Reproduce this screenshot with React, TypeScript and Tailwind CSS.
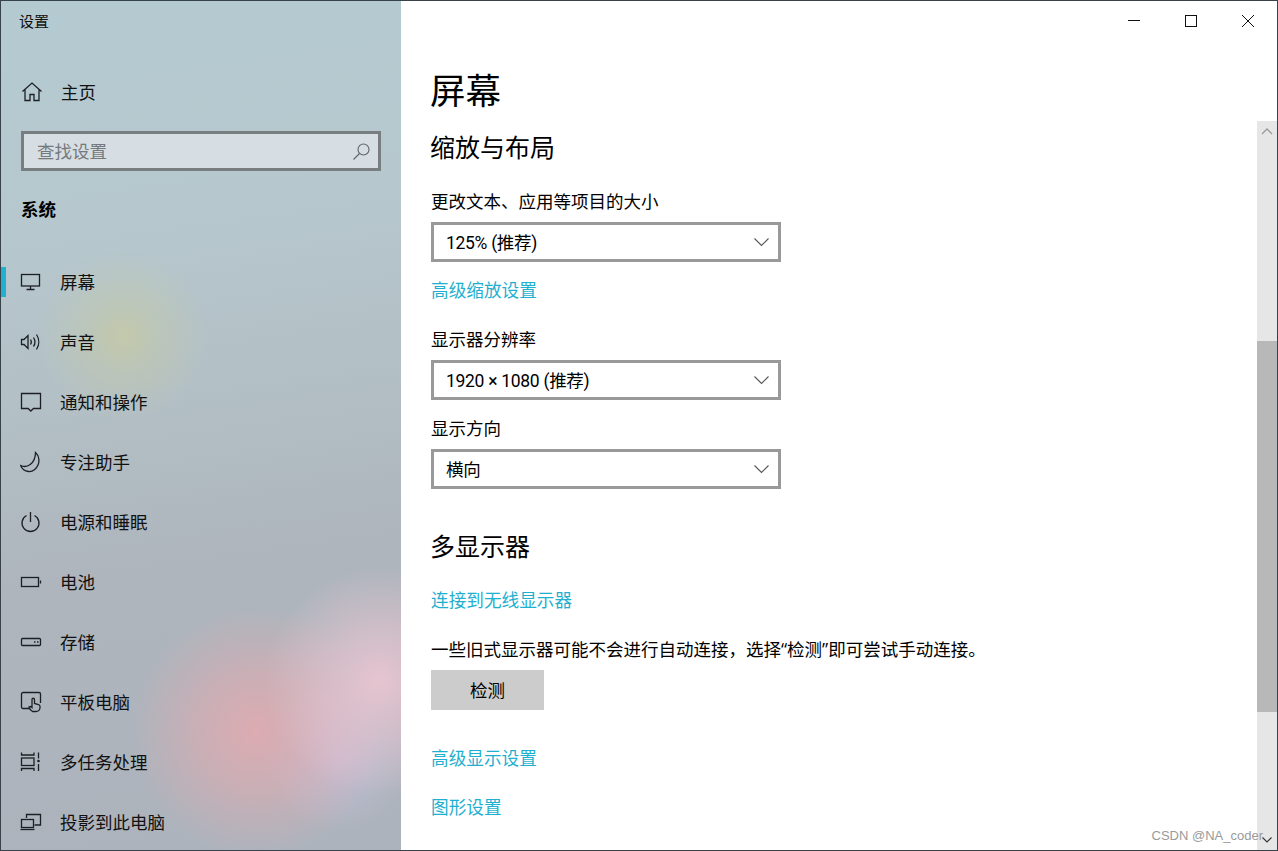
// Windows 10 settings window, display page
import { type ReactNode } from "react";

const Glyph = ({ children }: { children: ReactNode }) => (
  <svg width="22" height="22" viewBox="0 0 22 22" fill="none" stroke="#1c2024" strokeWidth="1.3" className="shrink-0">
    {children}
  </svg>
);

const navItems: { label: string; icon: ReactNode }[] = [
  {
    label: "屏幕",
    icon: (
      <>
        <rect x="1.5" y="3.5" width="18" height="11.5" />
        <path d="M10.5 15v3M6.5 18.5h8" />
      </>
    ),
  },
  {
    label: "声音",
    icon: (
      <>
        <path d="M1.5 8.5h2.5l4-4v13l-4-4H1.5z" />
        <path d="M10.5 8.5c1 1.5 1 3.5 0 5M13.5 6.5c1.8 2.8 1.8 6.2 0 9M16.5 3.5c3 4.5 3 10.5 0 15" />
      </>
    ),
  },
  {
    label: "通知和操作",
    icon: <path d="M1.5 2.5h19v15h-7l-2.7 2.5-2.7-2.5h-6.6z" />,
  },
  {
    label: "专注助手",
    icon: <path d="M15.500 1.500C19.500 5 19.500 10.500 18 14c-2 4.500-6 6.800-9.500 6.500-3.500-.3-6.500-2.500-7.800-6 3 1.500 6.500 1.200 9.500-1 4-3 5.300-7.500 5.300-12z" />,
  },
  {
    label: "电源和睡眠",
    icon: (
      <>
        <path d="M10.500 1v10" />
        <path d="M6.500 4.500a8.500 8.500 0 1 0 8 0" />
      </>
    ),
  },
  {
    label: "电池",
    icon: (
      <>
        <rect x="1.500" y="6.500" width="17" height="9" />
        <path d="M20.500 9.500v3" />
      </>
    ),
  },
  {
    label: "存储",
    icon: (
      <>
        <rect x="1.500" y="7.500" width="19" height="7" rx="1" />
        <path d="M14 11h1.500M17 11h1.500" />
      </>
    ),
  },
  {
    label: "平板电脑",
    icon: (
      <>
        <path d="M10 17.500H3a1.500 1.500 0 0 1-1.500-1.500V3A1.500 1.500 0 0 1 3 1.500h16A1.500 1.500 0 0 1 20.500 3v9" />
        <path d="M12.500 20.500c-2-1-3-2.500-3.500-4.500l1.800-.5 1.200 1V8.500a1.200 1.200 0 0 1 2.500 0v4l4 1c1 .4 1.500 1 1.500 2v1c0 2-1.500 4-4 4z" />
      </>
    ),
  },
  {
    label: "多任务处理",
    icon: (
      <>
        <path d="M1.500 1.500v2.500h12.500V1.500M1.500 20v-2.500h12.500V20" />
        <rect x="1.500" y="7" width="12.500" height="7.500" />
        <path d="M18.500 1.500v6M18.500 13v7" />
        <circle cx="18.500" cy="10" r="1.300" fill="#1c2024" stroke="none" />
      </>
    ),
  },
  {
    label: "投影到此电脑",
    icon: (
      <>
        <path d="M6.500 7V3.500h14v10.500h-6" />
        <rect x="1.500" y="8.500" width="12" height="8" />
        <path d="M.5 18.500h14" />
      </>
    ),
  },
];

function NavRow({ label, icon, active }: { label: string; icon: ReactNode; active?: boolean }) {
  return (
    <div className="flex h-[60px] shrink-0 items-center">
      <span className={active ? "h-[30px] w-[5px] shrink-0 bg-[#1fb0d2]" : "h-[30px] w-[5px] shrink-0"} />
      <span className="ml-[14px] flex w-[40px] shrink-0">
        <Glyph>{icon}</Glyph>
      </span>
      <span className="text-[17.5px] text-[#111]">{label}</span>
    </div>
  );
}

function Select({ value }: { value: string }) {
  return (
    <div className="mt-2 flex h-10 w-[350px] items-center justify-between border-[3px] border-[#999] pl-3 pr-[9px]">
      <span className="pt-[2px] font-['Roboto','Noto_Sans_CJK_SC',sans-serif] text-[17.5px] tracking-[-0.3px] text-black">{value}</span>
      <svg width="15" height="9" viewBox="0 0 15 9" fill="none" stroke="#555" strokeWidth="1.1">
        <path d="M.5.5 7.500 7.500l7-7" />
      </svg>
    </div>
  );
}

function Label({ children, className }: { children: ReactNode; className: string }) {
  return <div className={`h-[26px] text-[17.5px] leading-[26px] text-black ${className}`}>{children}</div>;
}

function Link({ children, className }: { children: ReactNode; className: string }) {
  return <div className={`h-[26px] text-[17.65px] leading-[26px] text-[#1fb0d0] ${className}`}>{children}</div>;
}

export default function App() {
  return (
    <div className="relative flex h-[851px] w-[1278px] overflow-hidden border border-[#37424a] bg-white font-['Open_Sans','Noto_Sans_CJK_SC',sans-serif]">
      {/* sidebar, acrylic wallpaper faked with blurred gradients */}
      <aside className="flex w-[400px] shrink-0 flex-col overflow-hidden bg-[radial-gradient(circle_at_122px_335px,rgba(205,205,150,0.6),rgba(205,205,150,0.3)_35px,rgba(205,205,150,0)_85px),radial-gradient(circle_at_378px_680px,rgba(236,198,210,0.9),rgba(236,198,210,0.5)_55px,rgba(236,198,210,0)_115px),radial-gradient(circle_at_255px_730px,rgba(228,170,175,0.85),rgba(228,170,175,0.5)_60px,rgba(228,170,175,0)_125px),radial-gradient(circle_at_335px_755px,rgba(200,195,225,0.75),rgba(200,195,225,0)_75px),linear-gradient(172deg,#b4cad1_0%,#b6c8ce_25%,#b3c0c6_45%,#aeb5bd_65%,#adb3bc_100%)]">
        <div className="flex h-10 shrink-0 items-center pl-[18px] text-[15px] text-[#111]">设置</div>
        <div className="mt-[21px] flex h-[60px] shrink-0 items-center pl-5">
          <span className="flex w-[40px] shrink-0">
            <Glyph>
              <path d="M1.500 10.500 11 2l9.500 8.500M4 8.500V19.500h5v-6h4v6h5V8.500" />
            </Glyph>
          </span>
          <span className="text-[17.5px] text-[#111]">主页</span>
        </div>
        <div className="ml-5 mt-[9px] flex h-10 w-[360px] shrink-0 items-center justify-between border-[3px] border-[#787d80] bg-[#d6dee3] pl-[13px] pr-2">
          <span className="text-[17.5px] text-[#75797c]">查找设置</span>
          <svg width="17" height="17" viewBox="0 0 17 17" fill="none" stroke="#5f6468" strokeWidth="1.1">
            <circle cx="10.500" cy="6.500" r="5.500" />
            <path d="M6.500 10.500.5 16.500" />
          </svg>
        </div>
        <div className="ml-5 mt-[18px] flex h-10 shrink-0 items-center text-[17.5px] font-bold text-black">系统</div>
        <div className="mt-[23px] flex flex-col">
          {navItems.map((item, i) => (
            <NavRow key={item.label} label={item.label} icon={item.icon} active={i === 0} />
          ))}
        </div>
      </aside>

      <main className="flex min-w-0 flex-1">
        <div className="flex-1 pl-[30px] pt-[64px]">
          <h1 className="-ml-px h-[50px] text-[35.500px] leading-[50px] text-black">屏幕</h1>
          <h2 className="-ml-px mt-[14px] h-9 text-[25px] leading-9 text-black">缩放与布局</h2>
          <Label className="mt-[23px]">更改文本、应用等项目的大小</Label>
          <Select value="125% (推荐)" />
          <Link className="mt-[15px]">高级缩放设置</Link>
          <Label className="mt-[23px]">显示器分辨率</Label>
          <Select value="1920 × 1080 (推荐)" />
          <Label className="mt-[15px]">显示方向</Label>
          <Select value="横向" />
          <h2 className="-ml-px mt-[39px] h-9 text-[25px] leading-9 text-black">多显示器</h2>
          <Link className="mt-[23px]">连接到无线显示器</Link>
          <Label className="mt-[23px]">一些旧式显示器可能不会进行自动连接，选择“检测”即可尝试手动连接。</Label>
          <div className="mt-2 flex h-10 w-[113px] items-center justify-center bg-[#ccc] text-[17.5px] text-black">检测</div>
          <Link className="mt-[35px]">高级显示设置</Link>
          <Link className="mt-[23px]">图形设置</Link>
        </div>

        {/* scrollbar */}
        <div className="mt-[120px] flex w-5 shrink-0 flex-col bg-[#e6e6e6]">
          <div className="flex h-5 items-center justify-center">
            <svg width="12" height="7" viewBox="0 0 12 7" fill="none" stroke="#9a9a9a" strokeWidth="1.3">
              <path d="M1 6l5-5 5 5" />
            </svg>
          </div>
          <div className="mt-[200px] h-[371px] bg-[#b8b8b8]" />
          <div className="mt-auto flex h-5 items-center justify-center">
            <svg width="10" height="6" viewBox="0 0 10 6" fill="none" stroke="#333" strokeWidth="1.1">
              <path d="M.5.5 5 5 9.500.5" />
            </svg>
          </div>
        </div>
      </main>

      {/* window controls */}
      <div className="absolute right-[23px] top-[14px] flex gap-[45px]">
        <svg width="12" height="12" viewBox="0 0 12 12" fill="none" stroke="#111" strokeWidth="1">
          <path d="M0 5.500h12" />
        </svg>
        <svg width="12" height="12" viewBox="0 0 12 12" fill="none" stroke="#111" strokeWidth="1">
          <rect x=".5" y=".5" width="11" height="11" />
        </svg>
        <svg width="12" height="12" viewBox="0 0 12 12" fill="none" stroke="#111" strokeWidth="1">
          <path d="M0 0l12 12M12 0 0 12" />
        </svg>
      </div>

      <span className="absolute bottom-[6px] right-[14px] text-[13px] leading-4 text-[#9a9a9a] font-['Liberation_Sans',sans-serif]">CSDN @NA_coder</span>
    </div>
  );
}
